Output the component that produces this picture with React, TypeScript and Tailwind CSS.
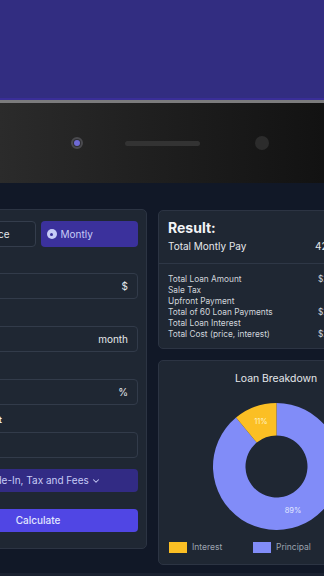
import React from "react";
import { ChevronDown } from "lucide-react";

const fields = [
  { label: "Vehicle Price", suffix: "$" },
  { label: "Loan Term", suffix: "month" },
  { label: "Interest Rate", suffix: "%" },
  { label: "Down Payment", suffix: "" },
];

const rows = [
  { label: "Total Loan Amount", value: "$25,000" },
  { label: "Sale Tax", value: "" },
  { label: "Upfront Payment", value: "" },
  { label: "Total of 60 Loan Payments", value: "$25,318" },
  { label: "Total Loan Interest", value: "" },
  { label: "Total Cost (price, interest)", value: "$28,318" },
];

const Donut: React.FC = () => (
  <svg width="127" height="127" viewBox="0 0 127 127">
    <path
      d="M 63.5 0 A 63.5 63.5 0 1 1 23.03 14.57 L 43.74 39.61 A 31 31 0 1 0 63.5 32.5 Z"
      fill="#818cf8"
    />
    <path
      d="M 23.03 14.57 A 63.5 63.5 0 0 1 63.5 0 L 63.5 32.5 A 31 31 0 0 0 43.74 39.61 Z"
      fill="#fbbf24"
    />
    <text x="48" y="21" fontSize="7.5" fill="#fef3c7" textAnchor="middle" fontFamily="Inter, sans-serif">
      11%
    </text>
    <text x="80" y="110" fontSize="7.5" fill="#e0e7ff" textAnchor="middle" fontFamily="Inter, sans-serif">
      89%
    </text>
  </svg>
);

const App: React.FC = () => {
  return (
    <div className="h-screen w-screen overflow-hidden bg-[#111827] font-['Inter',sans-serif]">
      {/* hero top */}
      <div className="h-[100px] border-b-2 border-[#3a2e98] bg-[#322d81]" />
      <div className="h-[3px] bg-[#7b7b7d]" />

      {/* device bezel */}
      <div className="flex h-[80px] items-center bg-linear-to-r from-[#2b2b2b] to-[#121212] pl-[71px]">
        <div className="flex h-[12px] w-[12px] items-center justify-center rounded-full border-2 border-[#4a4a4e] bg-[#2e2e33]">
          <div className="h-[6px] w-[6px] rounded-full bg-[#6f6ad6]" />
        </div>
        <div className="ml-[42px] h-[5px] w-[75px] rounded-full bg-[#333333]" />
        <div className="ml-[55px] h-[14px] w-[14px] rounded-full bg-[#2c2c2c]" />
      </div>

      <div className="flex h-[390px] items-start gap-[11px] pt-[26px] -ml-[71px]">
        {/* form card */}
        <div className="flex w-[218px] shrink-0 flex-col rounded-[5px] border border-[#2c3443] bg-[#1f2733] px-2 pt-[11px] pb-[16px]">
          <div className="grid h-[26px] grid-cols-2 gap-[5px]">
            <button className="flex items-center justify-end rounded-[4px] border border-[#343d4c] bg-[#1c2430] pr-[25px] text-[10px] text-[#e5e7eb]">
              <span className="mr-[4px] h-[10px] w-[10px] rounded-full border border-[#6b7280]" />
              Total Price
            </button>
            <button className="flex items-center rounded-[4px] bg-[#3b319c] pl-[6px] text-[10px] text-[#c7ccf7]">
              <span className="mr-[4px] flex h-[10px] w-[10px] items-center justify-center rounded-full bg-[#c7ccf7]">
                <span className="h-[3px] w-[3px] rounded-full bg-[#3b319c]" />
              </span>
              Montly
            </button>
          </div>

          <div className="mt-[6px] flex flex-col gap-[7px]">
            {fields.map((f) => (
              <div key={f.label} className="flex flex-col gap-[4px]">
                <div className="h-[16px] text-[8.8px] font-semibold leading-[16px] text-[#f3f4f6]">
                  {f.label}
                </div>
                <div className="flex h-[26px] items-center justify-end rounded-[4px] border border-[#323b4a] bg-[#1f2733] pr-[9px] text-[10px] text-[#e5e7eb]">
                  {f.suffix}
                </div>
              </div>
            ))}
          </div>

          <button className="mt-[11px] flex h-[23px] items-center justify-center gap-[2px] rounded-[4px] bg-[#322b84] pl-[5px] text-[10px] text-[#c7ccf7]">
            Trade-In, Tax and Fees
            <ChevronDown size={10} strokeWidth={2.5} />
          </button>
          <button className="mt-[17px] flex h-[23px] items-center justify-center rounded-[4px] bg-[#5046e4] text-[10px] font-medium text-[#e0e7ff]">
            Calculate
          </button>
        </div>

        {/* right column */}
        <div className="mt-[1px] flex w-[236px] shrink-0 flex-col gap-[11px]">
          <div className="rounded-[5px] border border-[#2c3443] bg-[#1f2733]">
            <div className="border-b border-[#2e3746] px-[9px] pt-[8px] pb-[10px]">
              <div className="text-[14px] font-bold leading-[18px] text-[#f3f4f6]">Result:</div>
              <div className="mt-[2px] flex text-[10px] leading-[14px] text-[#e5e7eb]">
                <span className="w-[147px]">Total Montly Pay</span>
                <span>422.37</span>
              </div>
            </div>
            <div className="px-[9px] pt-[10px] pb-[8px]">
              {rows.map((r) => (
                <div key={r.label} className="flex text-[8.3px] leading-[11px] text-[#d1d5db]">
                  <span className="w-[150px]">{r.label}</span>
                  <span>{r.value}</span>
                </div>
              ))}
            </div>
          </div>

          <div className="flex flex-col items-center rounded-[5px] border border-[#2c3443] bg-[#1f2733] pt-[11px] pb-[10px]">
            <div className="text-[10.4px] leading-[14px] text-[#e5e7eb]">Loan Breakdown</div>
            <div className="mt-[17px]">
              <Donut />
            </div>
            <div className="mt-[11px] flex w-full pl-[10px] text-[8.5px] text-[#9ca3af]">
              <div className="flex w-[84px] items-center gap-[5px]">
                <span className="h-[11px] w-[18px] bg-[#fbbf24]" />
                Interest
              </div>
              <div className="flex items-center gap-[5px]">
                <span className="h-[11px] w-[18px] bg-[#818cf8]" />
                Principal
              </div>
            </div>
          </div>
        </div>
      </div>
      <div className="h-[10px] bg-[#1a2130]" />
    </div>
  );
};

export default App;
